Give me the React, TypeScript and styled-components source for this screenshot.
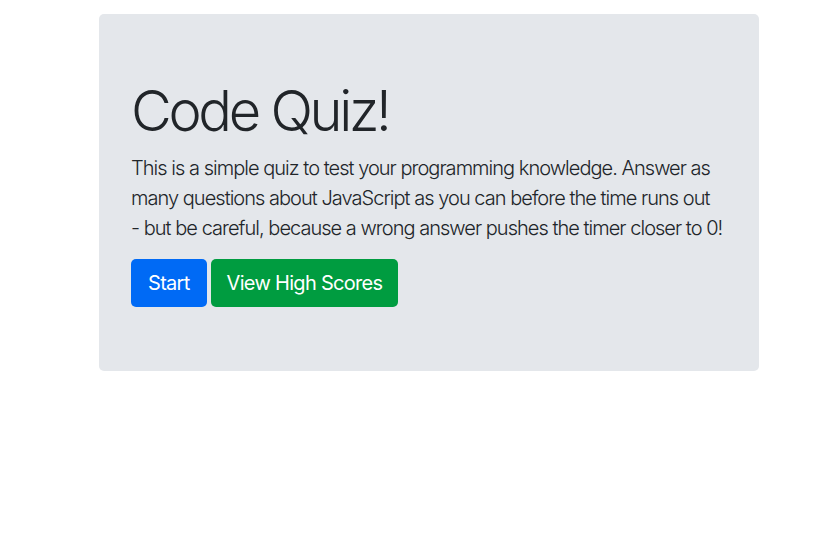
import React from "react";
import styled, { createGlobalStyle } from "styled-components";

const Global = createGlobalStyle`
  html, body { margin: 0; padding: 0; background: #ffffff; }
  body {
    font-family: Inter, "Noto Sans", "Liberation Sans", sans-serif;
    color: #212529;
  }
`;

const Page = styled.div`
  padding: 14px 0 0 99px;
`;

const Jumbotron = styled.section`
  width: 660px;
  box-sizing: border-box;
  padding: 64px 32px;
  background: #e4e7eb;
  border-radius: 5px;
`;

const Title = styled.h1`
  margin: 0 0 8px;
  font-size: 56px;
  font-weight: 300;
  line-height: 67px;
  letter-spacing: -3.3px;
`;

const Lead = styled.p`
  margin: 0 0 16px;
  font-size: 20px;
  font-weight: 300;
  line-height: 30px;
  letter-spacing: -0.97px;
`;

const NoWrap = styled.span`
  white-space: nowrap;
`;

const Actions = styled.div`
  display: flex;
  gap: 4px;
`;

const Button = styled.button<{ $variant: "primary" | "success" }>`
  height: 48px;
  padding: 0 ${(p) => (p.$variant === "primary" ? "17px" : "16px")};
  border: none;
  border-radius: 5px;
  font-family: inherit;
  font-size: 20px;
  font-weight: 400;
  letter-spacing: -0.7px;
  color: #ffffff;
  background: ${(p) => (p.$variant === "primary" ? "#006af5" : "#009c40")};
  cursor: pointer;
`;

export default function App() {
  return (
    <>
      <Global />
      <Page>
        <Jumbotron>
          <Title>Code Quiz!</Title>
          <Lead>
            This is a simple quiz to test your programming knowledge. Answer as
            many questions about JavaScript as you can before the time runs out{" "}
            <NoWrap>- but</NoWrap> be careful, because a wrong answer pushes the
            timer closer to 0!
          </Lead>
          <Actions>
            <Button $variant="primary">Start</Button>
            <Button $variant="success">View High Scores</Button>
          </Actions>
        </Jumbotron>
      </Page>
    </>
  );
}
